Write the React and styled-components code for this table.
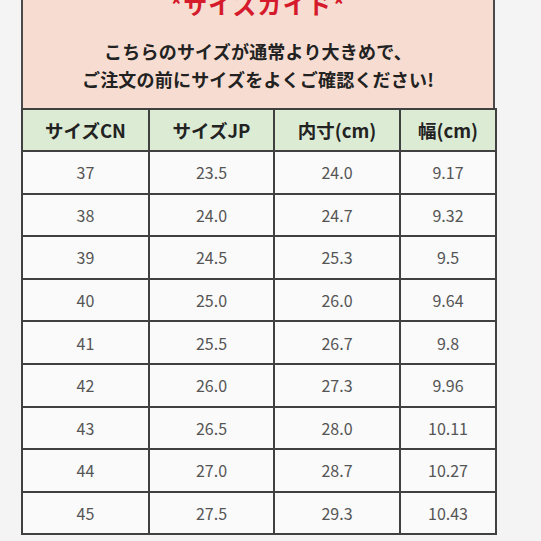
import React from "react";
import styled, { createGlobalStyle } from "styled-components";

const Global = createGlobalStyle`
  html, body { margin: 0; padding: 0; background: #f4f4f4; }
  body { font-family: "Noto Sans CJK JP", "Noto Sans", sans-serif; overflow: hidden; }
`;

const Page = styled.div`
  width: 541px;
  height: 541px;
  overflow: hidden;
  padding-left: 21px;
  box-sizing: border-box;
`;

const Sheet = styled.div`
  width: 474px;
  margin-top: -8px;
`;

const Banner = styled.div`
  background: #f7ddd1;
  border: 2px solid #4a4a4a;
  border-top: none;
  border-bottom: none;
  text-align: center;
  padding-bottom: 15px;
`;

const Title = styled.div`
  color: #d51a2c;
  font-size: 24px;
  font-weight: 700;
  line-height: 24px;
  letter-spacing: 1px;
`;

const Notice = styled.div`
  margin-top: 21px;
  color: #222;
  font-size: 18px;
  font-weight: 700;
  line-height: 28px;
  letter-spacing: 0.2px;
`;

const Table = styled.table`
  width: 474px;
  border-collapse: collapse;
  table-layout: fixed;
  background: #fafafa;
`;

const HeadCell = styled.th`
  background: #dcebd3;
  border: 2px solid #404040;
  height: 40px;
  padding: 0;
  font-size: 18.5px;
  font-weight: 700;
  color: #222;
  text-align: center;
`;

const Cell = styled.td`
  border: 2px solid #404040;
  height: 40.6px;
  padding: 0;
  font-size: 16px;
  font-weight: 400;
  color: #555;
  text-align: center;
`;

const cols = [127, 125, 126, 96];
const head = ["サイズCN", "サイズJP", "内寸(cm)", "幅(cm)"];
const rows = [
  ["37", "23.5", "24.0", "9.17"],
  ["38", "24.0", "24.7", "9.32"],
  ["39", "24.5", "25.3", "9.5"],
  ["40", "25.0", "26.0", "9.64"],
  ["41", "25.5", "26.7", "9.8"],
  ["42", "26.0", "27.3", "9.96"],
  ["43", "26.5", "28.0", "10.11"],
  ["44", "27.0", "28.7", "10.27"],
  ["45", "27.5", "29.3", "10.43"],
];

export default function App() {
  return (
    <Page>
      <Global />
      <Sheet>
        <Banner>
          <Title>*サイズガイド*</Title>
          <Notice>
            こちらのサイズが通常より大きめで、
            <br />
            ご注文の前にサイズをよくご確認ください!
          </Notice>
        </Banner>
        <Table>
          <colgroup>
            {cols.map((w, i) => (
              <col key={i} style={{ width: w }} />
            ))}
          </colgroup>
          <thead>
            <tr>
              {head.map((h) => (
                <HeadCell key={h}>{h}</HeadCell>
              ))}
            </tr>
          </thead>
          <tbody>
            {rows.map((r) => (
              <tr key={r[0]}>
                {r.map((c, i) => (
                  <Cell key={i}>{c}</Cell>
                ))}
              </tr>
            ))}
          </tbody>
        </Table>
      </Sheet>
    </Page>
  );
}
